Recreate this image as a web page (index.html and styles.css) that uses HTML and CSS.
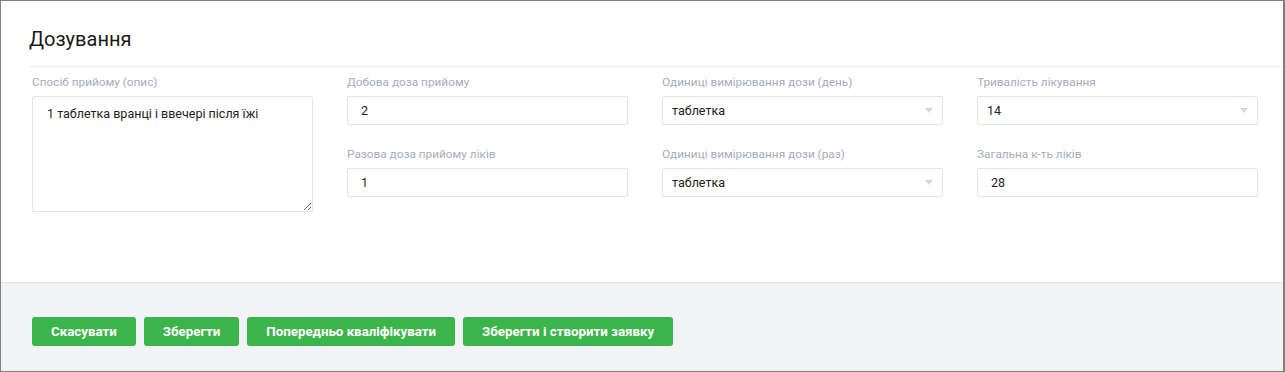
FILE: index.html
```html
<!DOCTYPE html>
<html lang="uk">
<head>
  <meta charset="UTF-8" />
  <meta name="viewport" content="width=device-width, initial-scale=1.0"/>
  <title>Дозування</title>
  <link rel="stylesheet" href="styles.css">
</head>
<body>

  <div class="panel">
    <div class="panel-head">
      <h2>Дозування</h2>
    </div>

    <div class="panel-body">
      <div class="dose-grid">
        <div class="col">
          <div class="field">
            <label for="method">Спосіб прийому (опис)</label>
            <textarea id="method" class="area">1 таблетка вранці і ввечері після їжі</textarea>
          </div>
        </div>

        <div class="col">
          <div class="field">
            <label for="dailyDose">Добова доза прийому</label>
            <input id="dailyDose" class="text-input" type="text" value="2" />
          </div>
          <div class="field">
            <label for="singleDose">Разова доза прийому ліків</label>
            <input id="singleDose" class="text-input" type="text" value="1" />
          </div>
        </div>

        <div class="col">
          <div class="field">
            <label for="unitDay">Одиниці вимірювання дози (день)</label>
            <div class="select-wrap">
              <select id="unitDay" class="select-input">
                <option>таблетка</option>
                <option>капсула</option>
              </select>
            </div>
          </div>
          <div class="field">
            <label for="unitOnce">Одиниці вимірювання дози (раз)</label>
            <div class="select-wrap">
              <select id="unitOnce" class="select-input">
                <option>таблетка</option>
                <option>капсула</option>
              </select>
            </div>
          </div>
        </div>

        <div class="col">
          <div class="field">
            <label for="duration">Тривалість лікування</label>
            <div class="select-wrap">
              <select id="duration" class="select-input">
                <option>14</option>
                <option>7</option>
                <option>30</option>
              </select>
            </div>
          </div>
          <div class="field">
            <label for="total">Загальна к-ть ліків</label>
            <input id="total" class="text-input" type="text" value="28" />
          </div>
        </div>
      </div>
    </div>

    <div class="panel-footer">
      <button class="btn">Скасувати</button>
      <button class="btn">Зберегти</button>
      <button class="btn">Попередньо кваліфікувати</button>
      <button class="btn">Зберегти і створити заявку</button>
    </div>
  </div>

</body>
</html>
```

FILE: styles.css
```css
* {
  box-sizing: border-box;
}

body {
  margin: 0;
  font-family: Roboto, 'Liberation Sans', sans-serif;
  background-color: #fff;
}

.panel {
  height: 372px;
  border: 1px solid #7f7f7f;
  border-right-width: 2px;
  background-color: #fff;
  display: flex;
  flex-direction: column;
}

.panel-head {
  margin-left: 28px;
  padding: 26px 0 15px;
  border-bottom: 1px solid #f0f1f3;
}

.panel-head h2 {
  margin: 0;
  font-size: 20px;
  line-height: 24px;
  font-weight: 400;
  color: #1a1a1a;
}

.panel-body {
  padding: 8px 25px 0 31px;
  flex: 1;
}

.dose-grid {
  display: grid;
  grid-template-columns: repeat(4, 1fr);
  gap: 34px;
}

.col {
  display: flex;
  flex-direction: column;
  gap: 22px;
}

.field label {
  display: block;
  font-size: 11.8px;
  line-height: 14px;
  color: #a5adbd;
  margin-bottom: 7px;
}

.text-input,
.select-input,
.area {
  display: block;
  width: 100%;
  border: 1px solid #dfe3eb;
  border-radius: 2px;
  background-color: #fff;
  font-family: Roboto, 'Liberation Sans', sans-serif;
  font-size: 12.5px;
  color: #222;
  outline: none;
}

.text-input {
  height: 29px;
  padding: 0 13px;
}

.area {
  height: 116px;
  padding: 9px 14px;
  line-height: 16px;
  resize: vertical;
}

.select-wrap {
  position: relative;
}

.select-input {
  height: 29px;
  padding: 0 9px;
  appearance: none;
  -webkit-appearance: none;
}

.select-wrap::after {
  content: "";
  position: absolute;
  right: 10px;
  top: 12px;
  border-left: 4px solid transparent;
  border-right: 4px solid transparent;
  border-top: 5px solid #d5d9e0;
  pointer-events: none;
}

.panel-footer {
  height: 89px;
  border-top: 1px solid #dde2ea;
  background-color: #f2f3f7;
  padding: 34px 0 0 31px;
  display: flex;
  gap: 8px;
  align-items: flex-start;
}

.btn {
  height: 29px;
  padding: 0 19px;
  border: none;
  border-radius: 3px;
  background-color: #3bb54a;
  color: #fff;
  font-family: Roboto, 'Liberation Sans', sans-serif;
  font-size: 13.3px;
  font-weight: bold;
  cursor: pointer;
}
```
